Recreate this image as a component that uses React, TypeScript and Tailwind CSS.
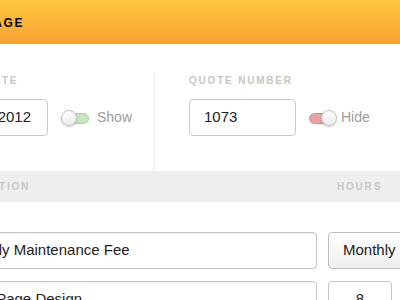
import React from "react";

const font = { fontFamily: '"Liberation Sans", Arial, Helvetica, sans-serif' };

function Toggle({ on }: { on: boolean }) {
  return (
    <div className="relative w-[28px] h-[16px] shrink-0">
      <div
        className={
          on
            ? "absolute left-[0px] right-[5px] top-[3px] h-[11px] rounded-full bg-[#eaa2a5] border border-[#d98b8f]"
            : "absolute left-[5px] right-[0px] top-[3px] h-[11px] rounded-full bg-[#c6e6c0] border border-[#a7d39f]"
        }
      />
      <div
        className={
          on
            ? "absolute right-0 top-0 w-[16px] h-[16px] rounded-full bg-gradient-to-b from-white to-[#ececec] border border-[#c4c4c4] shadow-[0_1px_2px_rgba(0,0,0,0.2)]"
            : "absolute left-0 top-0 w-[16px] h-[16px] rounded-full bg-gradient-to-b from-white to-[#ececec] border border-[#c4c4c4] shadow-[0_1px_2px_rgba(0,0,0,0.2)]"
        }
      />
    </div>
  );
}

export default function App() {
  return (
    <div className="w-[400px] h-[300px] overflow-hidden bg-white" style={font}>
      {/* Header */}
      <div className="h-[44px] bg-gradient-to-b from-[#fdc83e] to-[#f7a034] flex items-center">
        <div className="-ml-[71px] pt-[1px] text-[12px] font-bold tracking-[1.6px] text-black whitespace-nowrap">
          QUOTE PAGE
        </div>
      </div>

      {/* Top fields */}
      <div className="h-[127px] flex -ml-[59px] pt-[28px]">
        <div className="w-[213px] shrink-0 pt-[3px]">
          <div className="h-[12px] leading-[12px] text-[10px] font-bold tracking-[1.8px] text-[#c6c6c6] whitespace-nowrap">
            ISSUE DATE
          </div>
          <div className="mt-[12px] flex items-center">
            <div className="w-[107px] h-[37px] rounded-[4px] border border-[#c9c9c9] flex items-center justify-end pr-[16px] text-[15px] text-[#222] whitespace-nowrap">
              01/15/2012
            </div>
            <div className="ml-[13px]">
              <Toggle on={false} />
            </div>
            <div className="ml-[8px] text-[14px] text-[#9c9c9c]">Show</div>
          </div>
        </div>
        <div className="border-l border-[#eeeeee] pl-[34px] pt-[3px] flex-1">
          <div className="h-[12px] leading-[12px] text-[10px] font-bold tracking-[1.8px] text-[#c6c6c6] whitespace-nowrap">
            QUOTE NUMBER
          </div>
          <div className="mt-[12px] flex items-center">
            <div className="w-[107px] h-[37px] rounded-[4px] border border-[#c9c9c9] flex items-center pl-[14px] text-[15px] text-[#222]">
              1073
            </div>
            <div className="ml-[13px]">
              <Toggle on={true} />
            </div>
            <div className="ml-[4px] text-[14px] text-[#9c9c9c]">Hide</div>
          </div>
        </div>
      </div>

      {/* Table header */}
      <div className="h-[31px] bg-[#efefef] flex items-center -ml-[58px]">
        <div className="w-[386px] shrink-0 text-[10px] font-bold tracking-[1.8px] text-[#c6c6c6] whitespace-nowrap">
          DESCRIPTION
        </div>
        <div className="pl-[9px] text-[10px] font-bold tracking-[1.8px] text-[#c6c6c6]">
          HOURS
        </div>
      </div>

      {/* Rows */}
      <div className="-ml-[58px] pt-[30px] flex flex-col gap-[12px]">
        <div className="flex gap-[11px]">
          <div className="w-[375px] shrink-0 h-[37px] rounded-[4px] border border-[#c4c4c4] shadow-[inset_0_1px_2px_rgba(0,0,0,0.06)] flex items-center pl-[14px] text-[15px] text-[#222] whitespace-nowrap">
            Monthly Maintenance Fee
          </div>
          <div className="w-[110px] shrink-0 h-[37px] rounded-[4px] border border-[#bdbdbd] bg-gradient-to-b from-white to-[#eeeeee] flex items-center pl-[14px] text-[15px] text-[#222]">
            Monthly
          </div>
        </div>
        <div className="flex gap-[11px]">
          <div className="w-[375px] shrink-0 h-[37px] rounded-[4px] border border-[#c4c4c4] shadow-[inset_0_1px_2px_rgba(0,0,0,0.06)] flex items-center pl-[14px] text-[15px] text-[#222] whitespace-nowrap">
            Front Page Design
          </div>
          <div className="w-[64px] shrink-0 h-[37px] rounded-[4px] border border-[#c4c4c4] flex items-center justify-center text-[15px] text-[#222]">
            8
          </div>
        </div>
      </div>
    </div>
  );
}
